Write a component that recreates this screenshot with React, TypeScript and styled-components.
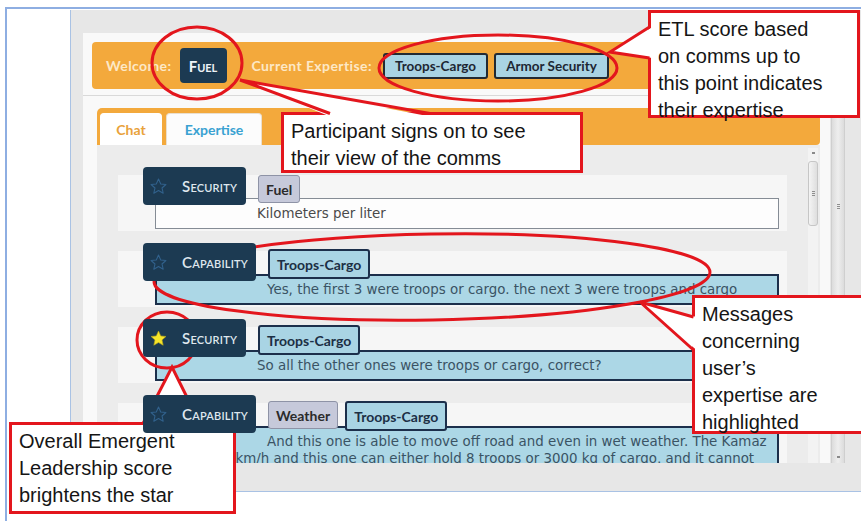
import styled, { createGlobalStyle } from "styled-components";

const ORANGE = "#f3a93c";
const NAVY = "#1c3a52";
const RED = "#e3161d";

const GlobalStyle = createGlobalStyle`
  html, body {
    margin: 0;
    padding: 0;
    background: #ffffff;
  }

  body {
    width: 861px;
    height: 521px;
    overflow: hidden;
    font-family: "Lato", "Open Sans", sans-serif;
  }
`;

const Screen = styled.div`
  position: relative;
  width: 861px;
  height: 521px;
  padding: 7px 0 0 5px;
  box-sizing: border-box;
  overflow: hidden;
`;

const Frame = styled.div`
  height: 100%;
  box-sizing: border-box;
  border-top: 2px solid #8eaee2;
  border-left: 2px solid #8eaee2;
  padding: 1px 0 0 63px;
`;

const Panel = styled.div`
  display: flex;
  height: 482px;
  box-sizing: border-box;
  background: #e7e7e7;
  border-left: 1px solid #a9c2e4;
  border-bottom: 1px solid #a9c2e4;
`;

const Main = styled.div`
  padding: 23px 0 0 12px;
`;

const Shell = styled.div`
  display: flex;
  flex-direction: column;
  width: 747px;
  height: 430px;
  box-sizing: border-box;
  padding: 9px 10px 0 9px;
  background: #f9f9f9;
`;

const Header = styled.div`
  display: flex;
  align-items: center;
  height: 47px;
  flex-shrink: 0;
  padding-left: 14px;
  border-radius: 4px;
  background: ${ORANGE};
`;

const HeaderText = styled.span<{ $gap?: number }>`
  margin-left: ${(p) => p.$gap ?? 0}px;
  color: #fde8c6;
  font-size: 14px;
  font-weight: 700;
  letter-spacing: 0.4px;
`;

const UserBadge = styled.div`
  display: flex;
  align-items: center;
  justify-content: center;
  width: 47px;
  height: 35px;
  margin-left: 8px;
  border-radius: 4px;
  background: ${NAVY};
  color: #eef3f7;
  font-size: 15px;
  font-weight: 700;
  font-variant: small-caps;
`;

const ExpertiseList = styled.div`
  display: flex;
  gap: 6px;
  margin-left: 11px;
`;

const ExpertiseChip = styled.span`
  display: flex;
  align-items: center;
  height: 26px;
  box-sizing: border-box;
  padding: 0 10px;
  border: 2px solid #222a33;
  border-radius: 3px;
  background: #a9d3e3;
  color: #1d2733;
  font-size: 13.5px;
  font-weight: 700;
`;

const Separator = styled.div`
  height: 1px;
  flex-shrink: 0;
  margin: 6px -10px 0 -9px;
  background: #d9d9d9;
`;

const TabPanel = styled.div`
  display: flex;
  flex-direction: column;
  flex: 1;
  min-height: 0;
  margin: 12px 0 0 5px;
`;

const TabBar = styled.div`
  display: flex;
  align-items: flex-end;
  gap: 4px;
  height: 37px;
  flex-shrink: 0;
  box-sizing: border-box;
  padding: 5px 0 0 3px;
  border-radius: 5px 5px 4px 0;
  background: ${ORANGE};
`;

const Tab = styled.div<{ $active?: boolean; $width: number }>`
  display: flex;
  align-items: center;
  justify-content: center;
  width: ${(p) => p.$width}px;
  height: 32px;
  box-sizing: border-box;
  border-radius: 4px 4px 0 0;
  border: 1px solid ${(p) => (p.$active ? "#ffffff" : "#eadfcf")};
  border-bottom: none;
  background: ${(p) => (p.$active ? "#ffffff" : "#fcfcfc")};
  color: ${(p) => (p.$active ? "#e9a23b" : "#3aa2d2")};
  font-size: 14px;
  font-weight: 700;
`;

const ChatArea = styled.div`
  display: flex;
  flex: 1;
  min-height: 0;
  overflow: hidden;
  background: #ececec;
`;

const MessageList = styled.div`
  flex: 1;
  min-width: 0;
  padding: 22px 21px 0 21px;
`;

const Row = styled.div`
  margin-bottom: 12px;
  padding: 0 0 2px 25px;
  background: linear-gradient(to bottom, transparent 8px, #f6f6f6 8px);
`;

const RowHead = styled.div`
  position: relative;
  z-index: 1;
  display: flex;
  align-items: flex-end;
`;

const RoleLabel = styled.div<{ $width: number }>`
  display: flex;
  align-items: center;
  gap: 15px;
  width: ${(p) => p.$width}px;
  height: 38px;
  box-sizing: border-box;
  padding-left: 7px;
  border-radius: 4px;
  background: ${NAVY};
  color: #dfe7ee;
  font-size: 15px;
  font-weight: 600;
  font-variant: small-caps;
  letter-spacing: 0.2px;
`;

const Tags = styled.div`
  display: flex;
  gap: 7px;
  margin: 0 0 2px 12px;
`;

const Tag = styled.span<{ $match?: boolean }>`
  display: flex;
  align-items: center;
  height: ${(p) => (p.$match ? 30 : 28)}px;
  box-sizing: border-box;
  padding: 0 7px;
  border: ${(p) => (p.$match ? "2px solid #1c2f4b" : "1px solid #8e93a6")};
  border-radius: 3px;
  background: ${(p) => (p.$match ? "#a9d4e4" : "#c6c9da")};
  color: ${(p) => (p.$match ? "#1c2f45" : "#2b2b2b")};
  font-size: 14px;
  font-weight: 700;
`;

const MessageBox = styled.div<{ $highlight?: boolean; $indent: number }>`
  margin: -7px 8px 0 12px;
  padding: ${(p) => (p.$highlight ? "5px 8px" : "6px 9px")};
  overflow: hidden;
  border: ${(p) => (p.$highlight ? "2px solid #1c2f4b" : "1px solid #858c95")};
  background: ${(p) => (p.$highlight ? "#acd7e6" : "#fdfdfd")};
  color: ${(p) => (p.$highlight ? "#3a5364" : "#4a4a4a")};
  font-family: "DejaVu Sans", "Open Sans", sans-serif;
  font-size: 13.4px;
  line-height: 17px;
  white-space: nowrap;

  /* first line clears the role label, wrapped lines run under it */
  & > div:first-child {
    text-indent: ${(p) => p.$indent}px;
  }
`;

const InnerScroll = styled.div`
  display: flex;
  flex-direction: column;
  align-items: center;
  flex-shrink: 0;
  width: 10px;
  margin: 3px 2px 0 0;
  background: #f3f3f3;
`;

const ArrowMark = styled.div`
  width: 3px;
  height: 2px;
  margin-top: 4px;
  background: #8a8a8a;
`;

const Thumb = styled.div`
  display: flex;
  align-items: center;
  justify-content: center;
  width: 10px;
  height: 65px;
  margin-top: 7px;
  box-sizing: border-box;
  border: 1px solid #c6c6c6;
  border-radius: 3px;
  background: linear-gradient(to right, #f4f4f4, #dedede);
`;

const Grip = styled.div`
  width: 3px;
  height: 6px;
  background: repeating-linear-gradient(
    to bottom,
    #8f8f8f 0 1px,
    transparent 1px 2px
  );
`;

const OuterScroll = styled.div`
  display: flex;
  flex-direction: column;
  align-items: center;
  width: 14px;
  height: 363px;
  margin: 90px 0 0 1px;
  box-sizing: border-box;
  border-left: 1px solid #cfcfcf;
  border-right: 1px solid #cfcfcf;
  background: linear-gradient(to right, #dcdcdc, #eeeeee 50%, #dcdcdc);
`;

const OuterGrip = styled(Grip)`
  margin-top: 104px;
`;

const OuterArrow = styled(ArrowMark)`
  margin-top: auto;
  margin-bottom: 5px;
`;

/* annotation layer drawn over the whole screen */
const Notes = styled.div`
  position: absolute;
  inset: 0;
  pointer-events: none;
`;

const Callout = styled.div<{ $x: number; $y: number; $w: number; $h: number }>`
  position: absolute;
  left: ${(p) => p.$x}px;
  top: ${(p) => p.$y}px;
  width: ${(p) => p.$w}px;
  height: ${(p) => p.$h}px;
  box-sizing: border-box;
  padding: 3px 0 0 7px;
  border: 3px solid ${RED};
  background: #ffffff;
  color: #151515;
  font-family: "Liberation Sans", Arial, sans-serif;
  font-size: 20px;
  line-height: 27px;
  white-space: nowrap;
`;

const Marks = styled.svg`
  position: absolute;
  inset: 0;
`;

type Pt = [number, number];

// speech-bubble tail: white wedge that breaks the box border, red sides
const Tail = ({ tip, a, b, inward }: { tip: Pt; a: Pt; b: Pt; inward: Pt }) => {
  const fill = [
    [a[0] + inward[0], a[1] + inward[1]],
    tip,
    [b[0] + inward[0], b[1] + inward[1]],
  ]
    .map((p) => p.join(","))
    .join(" ");
  return (
    <>
      <polygon points={fill} fill="#ffffff" />
      <polyline
        points={`${a.join(",")} ${tip.join(",")} ${b.join(",")}`}
        fill="none"
        stroke={RED}
        strokeWidth={3}
        strokeLinejoin="miter"
      />
    </>
  );
};

const Star = ({ lit }: { lit?: boolean }) => (
  <svg width="17" height="17" viewBox="0 0 16 16">
    <polygon
      points="8,1 10.1,5.6 15,6.1 11.3,9.4 12.4,14.3 8,11.8 3.6,14.3 4.7,9.4 1,6.1 5.9,5.6"
      fill={lit ? "#f6e52a" : "none"}
      stroke={lit ? "#b9a81a" : "#31618c"}
      strokeWidth={lit ? 0.6 : 1}
      strokeLinejoin="round"
    />
  </svg>
);

type Message = {
  role: "Security" | "Capability";
  lit?: boolean;
  tags: { name: string; match?: boolean }[];
  lines: string[];
  highlight?: boolean;
};

const roleWidth = { Security: 103, Capability: 113 };

const messages: Message[] = [
  {
    role: "Security",
    tags: [{ name: "Fuel" }],
    lines: ["Kilometers per liter"],
  },
  {
    role: "Capability",
    tags: [{ name: "Troops-Cargo", match: true }],
    lines: [
      "Yes, the first 3 were troops or cargo. the next 3 were troops and cargo",
    ],
    highlight: true,
  },
  {
    role: "Security",
    lit: true,
    tags: [{ name: "Troops-Cargo", match: true }],
    lines: ["So all the other ones were troops or cargo, correct?"],
    highlight: true,
  },
  {
    role: "Capability",
    tags: [{ name: "Weather" }, { name: "Troops-Cargo", match: true }],
    lines: [
      "And this one is able to move off road and even in wet weather. The Kamaz",
      "can go 90 km/h and this one can either hold 8 troops or 3000 kg of cargo, and it cannot",
    ],
    highlight: true,
  },
];

const App = () => {
  return (
    <>
      <GlobalStyle />
      <Screen>
        <Frame>
          <Panel>
            <Main>
              <Shell>
                <Header>
                  <HeaderText>Welcome:</HeaderText>
                  <UserBadge>Fuel</UserBadge>
                  <HeaderText $gap={25}>Current Expertise:</HeaderText>
                  <ExpertiseList>
                    <ExpertiseChip>Troops-Cargo</ExpertiseChip>
                    <ExpertiseChip>Armor Security</ExpertiseChip>
                  </ExpertiseList>
                </Header>
                <Separator />
                <TabPanel>
                  <TabBar>
                    <Tab $active $width={62}>
                      Chat
                    </Tab>
                    <Tab $width={96}>Expertise</Tab>
                  </TabBar>
                  <ChatArea>
                    <MessageList>
                      {messages.map((msg, i) => (
                        <Row key={i}>
                          <RowHead>
                            <RoleLabel $width={roleWidth[msg.role]}>
                              <Star lit={msg.lit} />
                              <span>{msg.role}</span>
                            </RoleLabel>
                            <Tags>
                              {msg.tags.map((tag) => (
                                <Tag key={tag.name} $match={tag.match}>
                                  {tag.name}
                                </Tag>
                              ))}
                            </Tags>
                          </RowHead>
                          <MessageBox
                            $highlight={msg.highlight}
                            $indent={roleWidth[msg.role] - 11}
                          >
                            {msg.lines.map((line, j) => (
                              <div key={j}>{line}</div>
                            ))}
                          </MessageBox>
                        </Row>
                      ))}
                    </MessageList>
                    <InnerScroll>
                      <ArrowMark />
                      <Thumb>
                        <Grip />
                      </Thumb>
                    </InnerScroll>
                  </ChatArea>
                </TabPanel>
              </Shell>
            </Main>
            <OuterScroll>
              <OuterGrip />
              <OuterArrow />
            </OuterScroll>
          </Panel>
        </Frame>

        <Notes>
          <Callout $x={648} $y={10} $w={212} $h={108}>
            ETL score based
            <br />
            on comms up to
            <br />
            this point indicates
            <br />
            their expertise
          </Callout>
          <Callout $x={281} $y={112} $w={302} $h={61}>
            Participant signs on to see
            <br />
            their view of the comms
          </Callout>
          <Callout $x={692} $y={295} $w={175} $h={139}>
            Messages
            <br />
            concerning
            <br />
            user’s
            <br />
            expertise are
            <br />
            highlighted
          </Callout>
          <Callout $x={9} $y={422} $w={227} $h={92}>
            Overall Emergent
            <br />
            Leadership score
            <br />
            brightens the star
          </Callout>

          <Marks width="861" height="521" viewBox="0 0 861 521">
            <g fill="none" stroke={RED} strokeWidth={3}>
              <ellipse cx={197} cy={63} rx={45} ry={36} />
              <ellipse cx={498} cy={68} rx={119} ry={33} />
              <ellipse
                cx={432}
                cy={277}
                rx={278}
                ry={43}
                transform="rotate(-1 432 277)"
              />
              <ellipse cx={167} cy={340} rx={30} ry={28} />
            </g>
            <Tail tip={[610, 52]} a={[649.5, 27]} b={[649.5, 58]} inward={[3, 0]} />
            <Tail tip={[240, 80]} a={[330, 113.5]} b={[430, 113.5]} inward={[0, 3]} />
            <Tail tip={[640, 302]} a={[693.5, 317]} b={[693.5, 350]} inward={[3, 0]} />
            <Tail tip={[172, 367]} a={[143, 423.5]} b={[200, 423.5]} inward={[0, 3]} />
          </Marks>
        </Notes>
      </Screen>
    </>
  );
};

export default App;
